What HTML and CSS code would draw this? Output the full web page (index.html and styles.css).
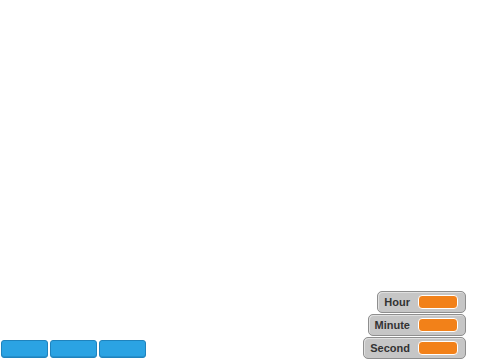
FILE: index.html
```html
<!DOCTYPE html>
<html lang="en">
<head>
  <meta charset="UTF-8">
  <title>Clock</title>
  <link rel="stylesheet" href="styles.css">
</head>
<body>

<div class="stage">
  <div class="bottom">
    <!-- boutons -->
    <div class="buttons">
      <div class="btn"></div>
      <div class="btn"></div>
      <div class="btn"></div>
    </div>

    <!-- moniteurs -->
    <div class="monitors">
      <div class="monitor"><span class="label">Hour</span><span class="value"></span></div>
      <div class="monitor"><span class="label">Minute</span><span class="value"></span></div>
      <div class="monitor"><span class="label">Second</span><span class="value"></span></div>
    </div>
  </div>
</div>

</body>
</html>
```

FILE: styles.css
```css
body {
  font-family: 'Liberation Sans', Arial, sans-serif;
  background: #ffffff;
  margin: 0;
  padding: 0;
}

.stage {
  width: 480px;
  height: 360px;
  display: flex;
  flex-direction: column;
  justify-content: flex-end;
}

.bottom {
  display: flex;
  justify-content: space-between;
  align-items: flex-end;
}

.buttons {
  display: flex;
  gap: 2px;
  padding: 0 0 2px 1px;
}

.btn {
  width: 45px;
  height: 16px;
  background: #2ba3e3;
  border: 1px solid #1f83bd;
  border-radius: 3px;
  box-shadow: inset 0 -1px 0 #2590cc;
}

.monitors {
  display: flex;
  flex-direction: column;
  align-items: flex-end;
  gap: 1px;
  padding: 0 14px 1px 0;
}

.monitor {
  display: flex;
  align-items: center;
  gap: 8px;
  height: 20px;
  padding: 0 7px 0 6px;
  background: #c6c6c6;
  border: 1px solid #8e8e8e;
  border-radius: 5px;
  box-shadow: inset 1px 1px 0 #e0e0e0;
}

.label {
  font-size: 11px;
  font-weight: bold;
  color: #333;
}

.value {
  width: 38px;
  height: 12px;
  background: #f28119;
  border: 1px solid #ffffff;
  border-radius: 4px;
}
```
